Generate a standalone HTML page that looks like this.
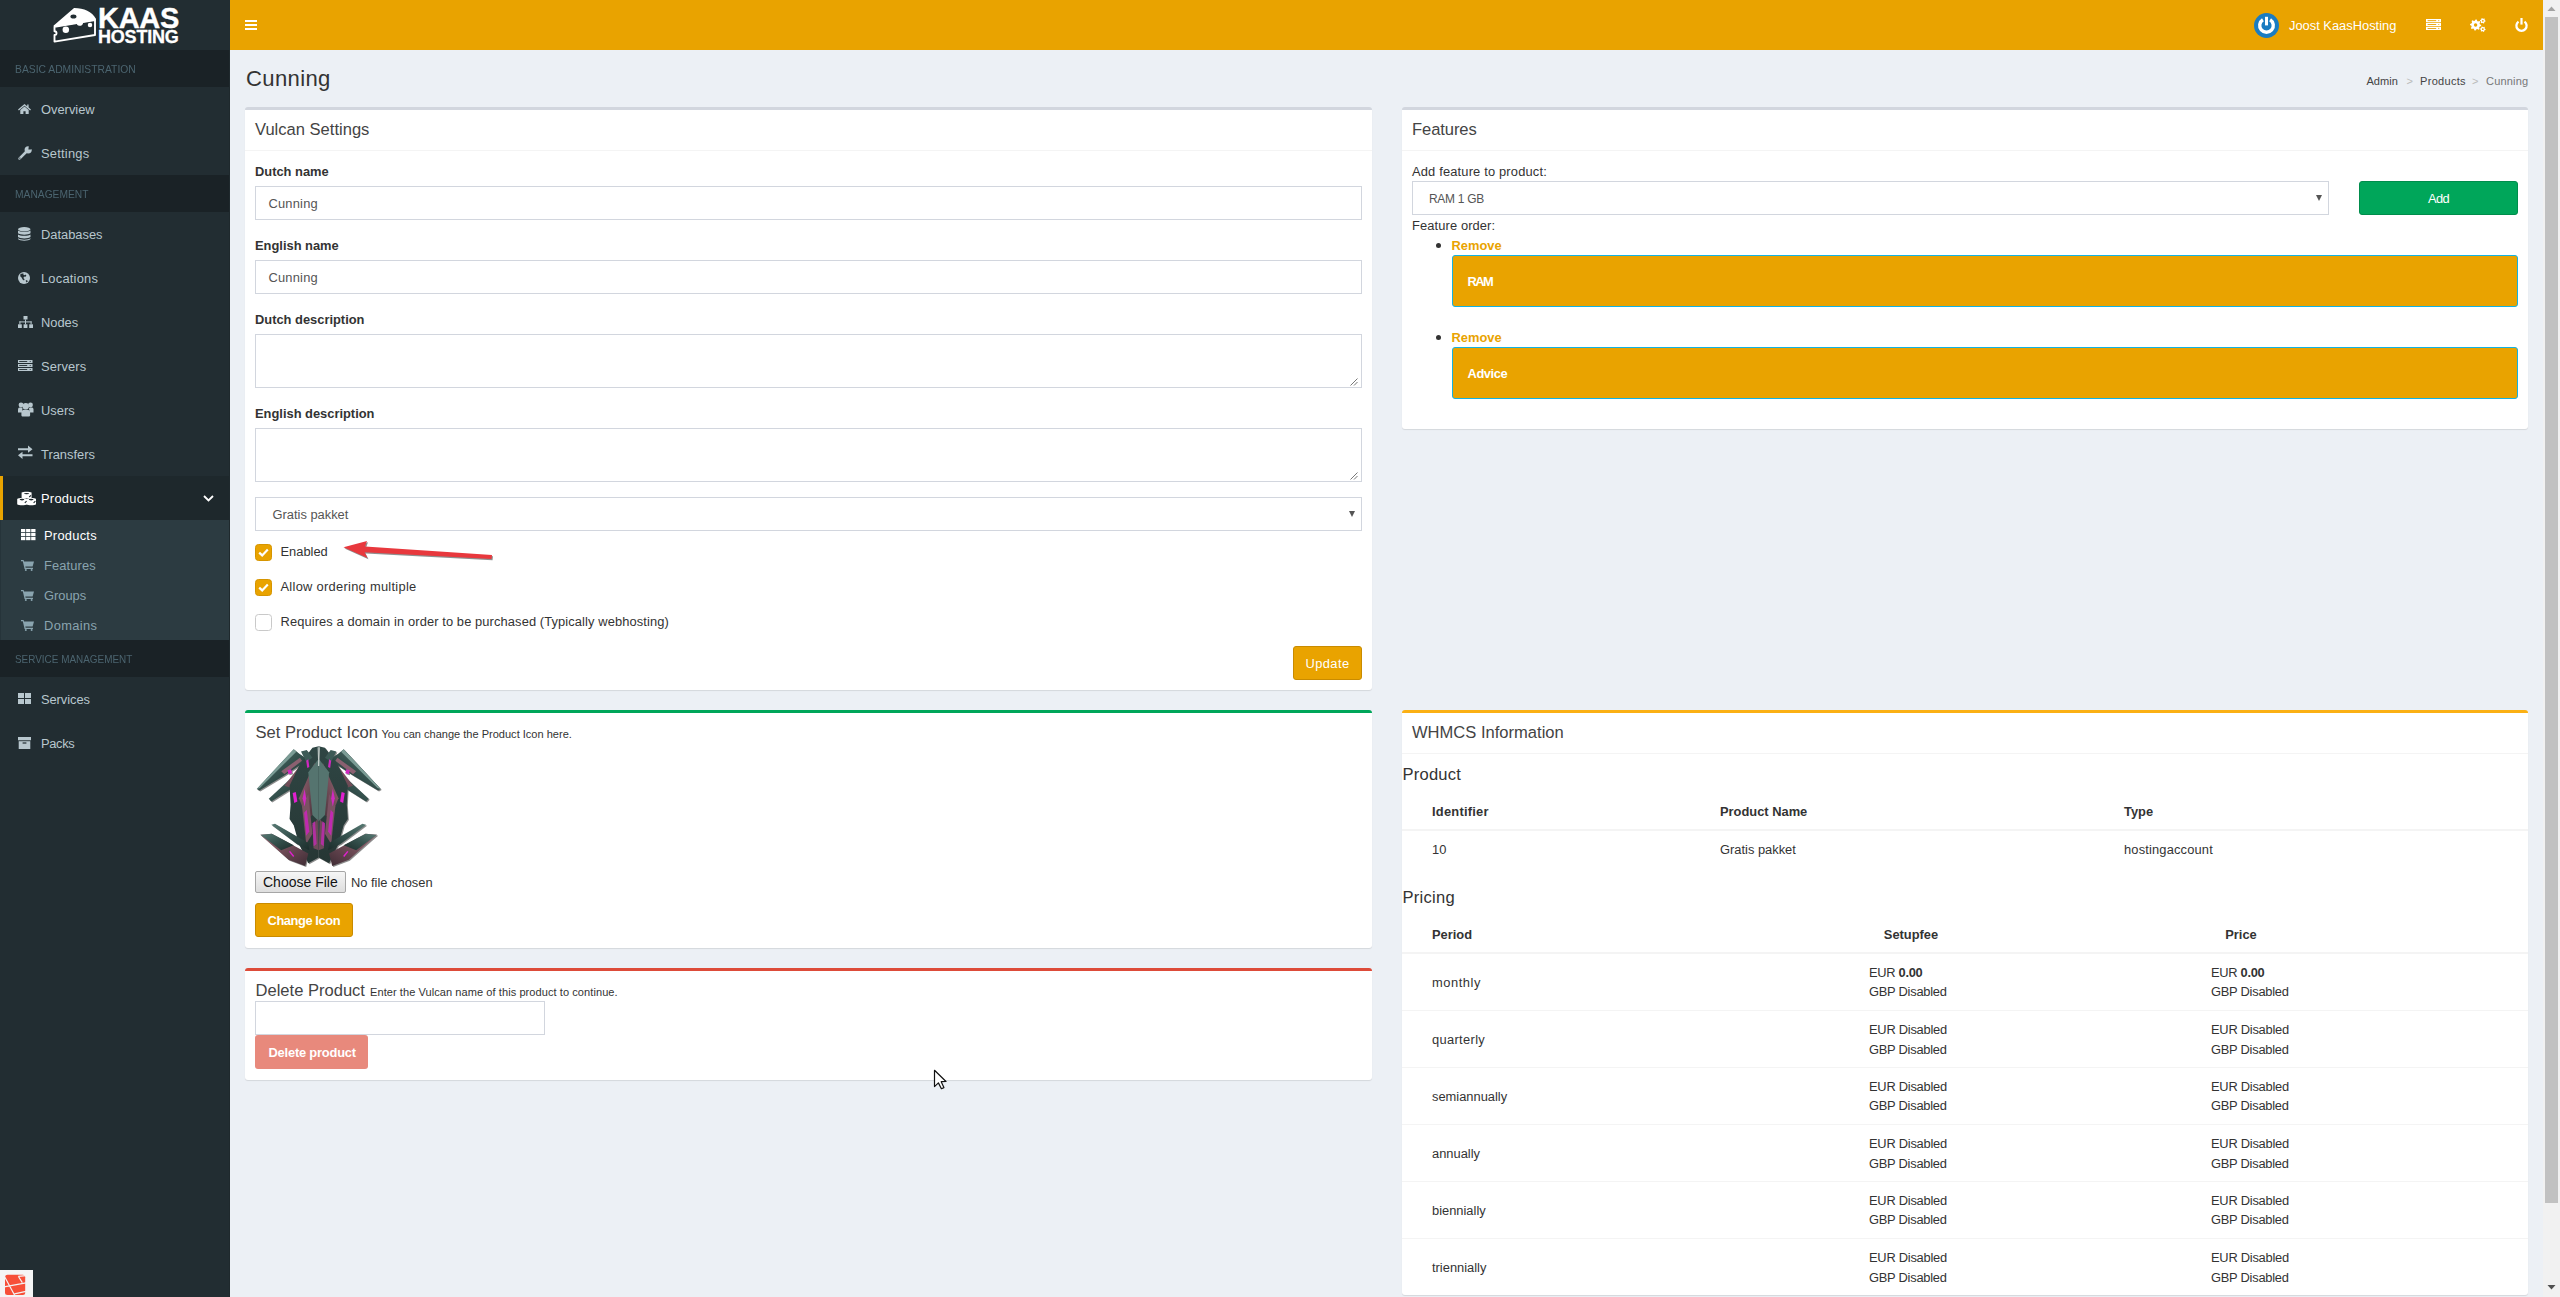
<!DOCTYPE html><html><head><meta charset="utf-8"><title>Cunning</title><style>
html,body{margin:0;padding:0;}
body{width:2560px;height:1297px;overflow:hidden;position:relative;background:#ecf0f5;font-family:'Liberation Sans', sans-serif;color:#333;}
.t{position:absolute;white-space:nowrap;line-height:1;}
svg{position:absolute;display:block;overflow:visible;}
</style></head><body>
<div style="position:absolute;left:0px;top:0px;width:230px;height:1297px;background:#222d32;"></div>
<div style="position:absolute;left:0px;top:50px;width:230px;height:37px;background:#1a2226;"></div>
<div style="position:absolute;left:0px;top:175px;width:230px;height:37px;background:#1a2226;"></div>
<div style="position:absolute;left:0px;top:640px;width:230px;height:37px;background:#1a2226;"></div>
<div style="position:absolute;left:0px;top:476px;width:230px;height:44px;background:#1e282c;"></div>
<div style="position:absolute;left:0px;top:476px;width:3px;height:44px;background:#e9a300;"></div>
<div style="position:absolute;left:0px;top:520px;width:230px;height:120px;background:#2c3b41;"></div>
<div style="position:absolute;left:0px;top:520px;width:1px;height:120px;background:#26343a;"></div>
<div style="position:absolute;left:229px;top:50px;width:1px;height:1247px;background:#1f292d;"></div>
<svg style="left:40px;top:0px;" width="160" height="50" viewBox="0 0 2560 800">
<path fill="#fff" d="M215,410 L540,130 C700,128 830,185 895,300 L895,322 L690,358 C690,395 660,415 630,412 C600,410 590,390 588,375 L240,432 Z"/>
<ellipse cx="535" cy="263" rx="48" ry="32" fill="#222d32"/>
<path fill="none" stroke="#fff" stroke-width="30" stroke-linejoin="round" d="M232,428 L880,322 L880,560 L232,665 L232,560 C275,555 275,505 232,500 Z"/>
<circle cx="413" cy="475" r="52" fill="#fff"/>
<circle cx="800" cy="400" r="36" fill="#fff"/>
</svg>
<div class="t" style="left:98px;top:4px;font-size:29px;font-weight:bold;color:#fff;transform:scaleX(1.0);transform-origin:left top;letter-spacing:-0.3px;-webkit-text-stroke:0.4px #fff">KAAS</div>
<div class="t" style="left:98px;top:28px;font-size:18px;font-weight:bold;color:#fff;transform:scaleX(1.0);transform-origin:left top;letter-spacing:-0.2px;-webkit-text-stroke:0.3px #fff">HOSTING</div>
<div class="t" style="left:15px;top:64px;font-size:11.04px;font-weight:normal;color:#4b646f;transform:scaleX(0.935);transform-origin:left top;">BASIC ADMINISTRATION</div>
<div class="t" style="left:15px;top:189px;font-size:11.04px;font-weight:normal;color:#4b646f;transform:scaleX(0.93);transform-origin:left top;">MANAGEMENT</div>
<div class="t" style="left:15px;top:654px;font-size:11.04px;font-weight:normal;color:#4b646f;transform:scaleX(0.9);transform-origin:left top;">SERVICE MANAGEMENT</div>
<div class="t" style="left:41px;top:104px;font-size:12.88px;font-weight:normal;color:#b8c7ce;">Overview</div>
<div class="t" style="left:41px;top:148px;font-size:12.88px;font-weight:normal;color:#b8c7ce;letter-spacing:0.233px;">Settings</div>
<div class="t" style="left:41px;top:229px;font-size:12.88px;font-weight:normal;color:#b8c7ce;">Databases</div>
<div class="t" style="left:41px;top:273px;font-size:12.88px;font-weight:normal;color:#b8c7ce;letter-spacing:0.214px;">Locations</div>
<div class="t" style="left:41px;top:317px;font-size:12.88px;font-weight:normal;color:#b8c7ce;">Nodes</div>
<div class="t" style="left:41px;top:361px;font-size:12.88px;font-weight:normal;color:#b8c7ce;letter-spacing:0.127px;">Servers</div>
<div class="t" style="left:41px;top:405px;font-size:12.88px;font-weight:normal;color:#b8c7ce;">Users</div>
<div class="t" style="left:41px;top:449px;font-size:12.88px;font-weight:normal;color:#b8c7ce;">Transfers</div>
<div class="t" style="left:41px;top:493px;font-size:12.88px;font-weight:normal;color:#ffffff;letter-spacing:0.254px;">Products</div>
<div class="t" style="left:44px;top:530px;font-size:12.88px;font-weight:normal;color:#ffffff;letter-spacing:0.254px;">Products</div>
<div class="t" style="left:44px;top:560px;font-size:12.88px;font-weight:normal;color:#8aa4af;letter-spacing:0.127px;">Features</div>
<div class="t" style="left:44px;top:590px;font-size:12.88px;font-weight:normal;color:#8aa4af;">Groups</div>
<div class="t" style="left:44px;top:620px;font-size:12.88px;font-weight:normal;color:#8aa4af;letter-spacing:0.363px;">Domains</div>
<div class="t" style="left:41px;top:694px;font-size:12.88px;font-weight:normal;color:#b8c7ce;letter-spacing:-0.062px;">Services</div>
<div class="t" style="left:41px;top:738px;font-size:12.88px;font-weight:normal;color:#b8c7ce;letter-spacing:-0.316px;">Packs</div>
<svg style="left:18px;top:104px;" width="13" height="10" viewBox="0 0 13 10"><g fill="#b8c7ce"><path d="M6.5 0 L0 5.4 L0.9 6.4 L6.5 1.7 L12.1 6.4 L13 5.4 L10.6 3.4 V0.6 H9.2 V2.2 Z"/><path d="M2.3 5.9 L6.5 2.4 L10.7 5.9 V10 H7.6 V7.2 H5.4 V10 H2.3 Z"/></g></svg>
<svg style="left:18px;top:146px;" width="14" height="14" viewBox="0 0 14 14"><g fill="#b8c7ce"><circle cx="10.2" cy="3.8" r="3.6"/><path d="M8.6 3.6 L10.4 5.4 L2.6 13.2 C2 13.8 1 13.8 0.6 13.4 C0.2 13 0.2 12 0.8 11.4 Z"/></g><path d="M10.8 0 L14 0 L14 3.2 L12.2 3.6 L10.4 3.6 Z" fill="#222d32"/><circle cx="1.9" cy="12.1" r="0.7" fill="#222d32"/></svg>
<svg style="left:18px;top:227px;" width="12.5" height="14" viewBox="0 0 12.5 14"><g fill="#b8c7ce"><ellipse cx="6.25" cy="2.2" rx="6.25" ry="2.2"/><path d="M0 3.6 C1.5 5.4 11 5.4 12.5 3.6 V6.3 C11 8.1 1.5 8.1 0 6.3 Z"/><path d="M0 7.5 C1.5 9.3 11 9.3 12.5 7.5 V10.1 C11 11.9 1.5 11.9 0 10.1 Z"/><path d="M0 11.3 C1.5 13.1 11 13.1 12.5 11.3 V12 C11 14.2 1.5 14.2 0 12 Z"/></g></svg>
<svg style="left:18px;top:272px;" width="12" height="12" viewBox="0 0 12 12"><circle cx="6" cy="6" r="6" fill="#b8c7ce"/><path fill="#222d32" d="M2.2 2.6 C3 1.6 4.4 1.2 5.6 1.5 L5.2 2.6 L6.8 3.2 L7.6 2.4 L8.4 3.6 L7.2 5 L6.2 4.6 L5.4 6 L6.6 7.2 L6 8.6 L4.6 7.4 L3.6 5.4 L2.4 4.6 Z"/><path fill="#222d32" d="M7.6 8.8 L9 8 L9.8 9.4 L8.6 10.6 Z"/></svg>
<svg style="left:18px;top:316px;" width="15" height="12" viewBox="0 0 15 12"><g fill="#b8c7ce"><rect x="5.5" y="0" width="4" height="3.5"/><rect x="0" y="8.3" width="3.8" height="3.7"/><rect x="5.6" y="8.3" width="3.8" height="3.7"/><rect x="11.2" y="8.3" width="3.8" height="3.7"/><rect x="7" y="3.5" width="1" height="4.8"/><rect x="1.4" y="5.4" width="12.2" height="1"/><rect x="1.4" y="5.4" width="1" height="3"/><rect x="12.6" y="5.4" width="1" height="3"/></g></svg>
<svg style="left:18px;top:360px;" width="14.5" height="11" viewBox="0 0 14.5 11"><g fill="#b8c7ce"><rect x="0" y="0" width="14.5" height="3"/><rect x="0" y="4" width="14.5" height="3"/><rect x="0" y="8" width="14.5" height="3"/></g><g fill="#222d32"><rect x="1.2" y="1.1" width="8" height="0.9"/><rect x="1.2" y="5.1" width="8" height="0.9"/><rect x="1.2" y="9.1" width="8" height="0.9"/><circle cx="12.2" cy="1.5" r="0.6"/><circle cx="12.2" cy="5.5" r="0.6"/><circle cx="12.2" cy="9.5" r="0.6"/></g></svg>
<svg style="left:18px;top:402px;" width="15.5" height="14.5" viewBox="0 0 15.5 14.5"><g fill="#b8c7ce"><circle cx="3" cy="3" r="2.4"/><circle cx="12.5" cy="3" r="2.4"/><path d="M0 7.5 C0 5.8 1.2 5.5 2.5 5.5 L4.5 5.8 L4 10.5 L0 10.5 Z"/><path d="M15.5 7.5 C15.5 5.8 14.3 5.5 13 5.5 L11 5.8 L11.5 10.5 L15.5 10.5 Z"/><circle cx="7.75" cy="4.2" r="3.2"/><path d="M3.4 10.8 C3.4 8.5 4.8 7.8 6 7.8 L9.5 7.8 C10.7 7.8 12.1 8.5 12.1 10.8 L12.1 13 C12.1 14 11.5 14.5 10.5 14.5 L5 14.5 C4 14.5 3.4 14 3.4 13 Z"/></g></svg>
<svg style="left:18px;top:444.5px;" width="14.5" height="14.5" viewBox="0 0 14.5 14.5"><g fill="#b8c7ce"><path d="M0 3.2 H10 V0.5 L14.5 4.2 L10 7.8 V5.2 H0 Z"/><path d="M14.5 9.3 H4.5 V6.7 L0 10.3 L4.5 14 V11.3 H14.5 Z"/></g></svg>
<svg style="left:17px;top:490.5px;" width="19" height="14.5" viewBox="0 0 19 14.5"><g fill="#fff"><path d="M4.6 1.6 C6 0.3 13 0.3 14.6 1.6 V7 H4.6 Z"/><path d="M0.2 8 C1.5 6.6 8.6 6.6 10 8 V13.2 C8.6 14.6 1.5 14.6 0.2 13.2 Z"/><path d="M9.4 8 C10.8 6.6 17.8 6.6 19 8 V13.2 C17.8 14.6 10.8 14.6 9.4 13.2 Z"/></g><g fill="#1e282c"><ellipse cx="9.6" cy="2.6" rx="2.6" ry="0.7"/><ellipse cx="5" cy="8.6" rx="2.4" ry="0.8"/><ellipse cx="14.2" cy="8.6" rx="2.4" ry="0.8"/></g><g stroke="#1e282c" stroke-width="1.1"><path d="M12.2 6 L14 4.4"/><path d="M7.8 11.8 L9.6 10.2"/><path d="M16.6 11.8 L18.4 10.2"/></g></svg>
<svg style="left:203px;top:495px;" width="11" height="7" viewBox="0 0 11 7"><path d="M1 1 L5.5 5.5 L10 1" fill="none" stroke="#fff" stroke-width="1.8"/></svg>
<svg style="left:20.5px;top:529px;" width="15" height="11.2" viewBox="0 0 15 11.2"><g fill="#fff"><rect x="0.0" y="0" width="4.3" height="3.2"/><rect x="5.1" y="0" width="4.3" height="3.2"/><rect x="10.2" y="0" width="4.3" height="3.2"/><rect x="0.0" y="4" width="4.3" height="3.2"/><rect x="5.1" y="4" width="4.3" height="3.2"/><rect x="10.2" y="4" width="4.3" height="3.2"/><rect x="0.0" y="8" width="4.3" height="3.2"/><rect x="5.1" y="8" width="4.3" height="3.2"/><rect x="10.2" y="8" width="4.3" height="3.2"/></g></svg>
<svg style="left:21px;top:560px;" width="13" height="11" viewBox="0 0 13 11"><g fill="#8aa4af"><path d="M0 0 H2.6 L3 1.6 H13 L11.6 6.6 H4.3 L4.6 7.8 H12 V9 H3.6 L1.8 1.2 H0 Z"/><circle cx="4.8" cy="10" r="1"/><circle cx="10.6" cy="10" r="1"/></g></svg>
<svg style="left:21px;top:590px;" width="13" height="11" viewBox="0 0 13 11"><g fill="#8aa4af"><path d="M0 0 H2.6 L3 1.6 H13 L11.6 6.6 H4.3 L4.6 7.8 H12 V9 H3.6 L1.8 1.2 H0 Z"/><circle cx="4.8" cy="10" r="1"/><circle cx="10.6" cy="10" r="1"/></g></svg>
<svg style="left:21px;top:620px;" width="13" height="11" viewBox="0 0 13 11"><g fill="#8aa4af"><path d="M0 0 H2.6 L3 1.6 H13 L11.6 6.6 H4.3 L4.6 7.8 H12 V9 H3.6 L1.8 1.2 H0 Z"/><circle cx="4.8" cy="10" r="1"/><circle cx="10.6" cy="10" r="1"/></g></svg>
<svg style="left:18px;top:693px;" width="13" height="11" viewBox="0 0 13 11"><g fill="#b8c7ce"><rect x="0" y="0" width="6" height="5"/><rect x="7" y="0" width="6" height="5"/><rect x="0" y="6" width="6" height="5"/><rect x="7" y="6" width="6" height="5"/></g></svg>
<svg style="left:18px;top:737px;" width="13" height="12" viewBox="0 0 13 12"><g fill="#b8c7ce"><rect x="0" y="0" width="13" height="3.3"/><path d="M0.7 4.2 H12.3 V12 H0.7 Z"/></g><rect x="4.6" y="5.4" width="3.8" height="1.2" fill="#222d32"/></svg>
<div style="position:absolute;left:0px;top:1270px;width:33px;height:27px;background:#f5f5f5;"></div>
<svg style="left:4px;top:1274px;" width="22" height="22" viewBox="0 0 22 22"><rect x="1" y="0.8" width="20.2" height="20.2" rx="2.5" fill="#f74f38"/><path d="M0.5 2.5 L10.5 21 M0 12.8 L22 8.8 M14.3 2.3 L18.3 8.6 M14.3 2.3 L22 1.6 M10.5 19.9 L22 17.4" stroke="#f4f4f4" stroke-width="1.2" fill="none"/></svg>
<div style="position:absolute;left:230px;top:0px;width:2313px;height:50px;background:#e9a300;"></div>
<div style="position:absolute;left:245px;top:20px;width:12px;height:2px;background:#fff;"></div>
<div style="position:absolute;left:245px;top:24px;width:12px;height:2px;background:#fff;"></div>
<div style="position:absolute;left:245px;top:28px;width:12px;height:2px;background:#fff;"></div>
<svg style="left:2254px;top:13px;" width="25" height="25" viewBox="0 0 25 25"><circle cx="12.5" cy="12.5" r="12.5" fill="#1a7cc1"/><path d="M8.9 6.73 A6.8 6.8 0 1 0 16.1 6.73" fill="none" stroke="#fff" stroke-width="3.4"/><rect x="11" y="3.8" width="3" height="8.6" fill="#fff"/></svg>
<div class="t" style="left:2289px;top:20px;font-size:12.88px;font-weight:normal;color:#fff;">Joost KaasHosting</div>
<svg style="left:2426px;top:19px;" width="15" height="11" viewBox="0 0 15 11"><g fill="#fff"><rect x="0" y="0" width="15" height="3.2"/><rect x="0" y="3.9" width="15" height="3.2"/><rect x="0" y="7.8" width="15" height="3.2"/></g><g fill="#e9a300"><rect x="1.6" y="1.2" width="8.6" height="0.9"/><rect x="1.6" y="5.1" width="8.6" height="0.9"/><rect x="1.6" y="9" width="8.6" height="0.9"/><circle cx="12.8" cy="1.6" r="0.55"/><circle cx="12.8" cy="5.5" r="0.55"/><circle cx="12.8" cy="9.4" r="0.55"/></g></svg>
<svg style="left:2470px;top:18px;" width="16" height="14" viewBox="0 0 16 14"><polygon points="11.20,7.00 11.09,8.09 9.57,8.65 9.18,9.39 9.56,10.96 8.71,11.66 7.25,10.97 6.44,11.22 5.60,12.60 4.51,12.49 3.95,10.97 3.21,10.58 1.64,10.96 0.94,10.11 1.63,8.65 1.38,7.84 0.00,7.00 0.11,5.91 1.63,5.35 2.02,4.61 1.64,3.04 2.49,2.34 3.95,3.03 4.76,2.78 5.60,1.40 6.69,1.51 7.25,3.03 7.99,3.42 9.56,3.04 10.26,3.89 9.57,5.35 9.82,6.16" fill="#fff"/><circle cx="5.6" cy="7" r="1.7" fill="#e9a300"/><polygon points="15.60,2.80 15.50,3.52 14.62,3.85 14.28,4.28 14.20,5.22 13.52,5.50 12.80,4.90 12.26,4.83 11.40,5.22 10.82,4.78 10.98,3.85 10.77,3.34 10.00,2.80 10.10,2.08 10.98,1.75 11.32,1.32 11.40,0.38 12.08,0.10 12.80,0.70 13.34,0.77 14.20,0.38 14.78,0.82 14.62,1.75 14.83,2.26" fill="#fff"/><circle cx="12.8" cy="2.8" r="0.9" fill="#e9a300"/><polygon points="15.60,11.20 15.50,11.92 14.62,12.25 14.28,12.68 14.20,13.62 13.52,13.90 12.80,13.30 12.26,13.23 11.40,13.62 10.82,13.18 10.98,12.25 10.77,11.74 10.00,11.20 10.10,10.48 10.98,10.15 11.32,9.72 11.40,8.78 12.08,8.50 12.80,9.10 13.34,9.17 14.20,8.78 14.78,9.22 14.62,10.15 14.83,10.66" fill="#fff"/><circle cx="12.8" cy="11.2" r="0.9" fill="#e9a300"/></svg>
<svg style="left:2515px;top:18px;" width="13" height="13" viewBox="0 0 13 13"><path d="M3.5 3.6 A5.1 5.1 0 1 0 9.5 3.6" fill="none" stroke="#fff" stroke-width="2.3"/><rect x="5.4" y="0" width="2.2" height="6.6" fill="#fff"/></svg>
<div style="position:absolute;left:2543px;top:0px;width:17px;height:1297px;background:#f1f1f1;"></div>
<div style="position:absolute;left:2545px;top:17px;width:13px;height:1186px;background:#c1c1c1;"></div>
<svg style="left:2547px;top:6px;" width="9" height="5" viewBox="0 0 9 5"><path d="M0.5 5 L4.5 0.5 L8.5 5 Z" fill="#a3a3a3"/></svg>
<svg style="left:2547px;top:1285px;" width="9" height="5" viewBox="0 0 9 5"><path d="M0.5 0 L4.5 4.5 L8.5 0 Z" fill="#505050"/></svg>
<div class="t" style="left:246px;top:68px;font-size:22.08px;font-weight:normal;color:#333;letter-spacing:0.352px;">Cunning</div>
<div class="t" style="left:2366.5px;top:76px;font-size:11.04px;font-weight:normal;color:#444;">Admin</div>
<div class="t" style="left:2406.5px;top:76px;font-size:11.04px;font-weight:normal;color:#bbb;">&gt;</div>
<div class="t" style="left:2420px;top:76px;font-size:11.04px;font-weight:normal;color:#444;letter-spacing:0.300px;">Products</div>
<div class="t" style="left:2472px;top:76px;font-size:11.04px;font-weight:normal;color:#bbb;">&gt;</div>
<div class="t" style="left:2486px;top:76px;font-size:11.04px;font-weight:normal;color:#777;letter-spacing:0.176px;">Cunning</div>
<div style="position:absolute;left:245px;top:107px;width:1127px;height:583px;background:#fff;border-top:3px solid #d2d6de;border-radius:3px;box-shadow:0 1px 1px rgba(0,0,0,0.1);box-sizing:border-box;"></div>
<div style="position:absolute;left:1402px;top:107px;width:1126px;height:322px;background:#fff;border-top:3px solid #d2d6de;border-radius:3px;box-shadow:0 1px 1px rgba(0,0,0,0.1);box-sizing:border-box;"></div>
<div style="position:absolute;left:245px;top:710px;width:1127px;height:238px;background:#fff;border-top:3px solid #00a65a;border-radius:3px;box-shadow:0 1px 1px rgba(0,0,0,0.1);box-sizing:border-box;"></div>
<div style="position:absolute;left:245px;top:968px;width:1127px;height:112px;background:#fff;border-top:3px solid #dd4b39;border-radius:3px;box-shadow:0 1px 1px rgba(0,0,0,0.1);box-sizing:border-box;"></div>
<div style="position:absolute;left:1402px;top:710px;width:1126px;height:585px;background:#fff;border-top:3px solid #fbb014;border-radius:3px;box-shadow:0 1px 1px rgba(0,0,0,0.1);box-sizing:border-box;"></div>
<div class="t" style="left:255px;top:122px;font-size:16.56px;font-weight:normal;color:#444;">Vulcan Settings</div>
<div style="position:absolute;left:245px;top:150px;width:1127px;height:1px;background:#f4f4f4;"></div>
<div class="t" style="left:255px;top:166px;font-size:12.88px;font-weight:bold;color:#333;">Dutch name</div>
<div style="position:absolute;left:255px;top:186px;width:1107px;height:34px;background:#fff;border:1px solid #d2d6de;box-sizing:border-box;"></div>
<div class="t" style="left:268.5px;top:198px;font-size:12.88px;font-weight:normal;color:#555;letter-spacing:0.206px;">Cunning</div>
<div class="t" style="left:255px;top:240px;font-size:12.88px;font-weight:bold;color:#333;">English name</div>
<div style="position:absolute;left:255px;top:260px;width:1107px;height:34px;background:#fff;border:1px solid #d2d6de;box-sizing:border-box;"></div>
<div class="t" style="left:268.5px;top:272px;font-size:12.88px;font-weight:normal;color:#555;letter-spacing:0.206px;">Cunning</div>
<div class="t" style="left:255px;top:314px;font-size:12.88px;font-weight:bold;color:#333;">Dutch description</div>
<div style="position:absolute;left:255px;top:334px;width:1107px;height:54px;background:#fff;border:1px solid #d2d6de;box-sizing:border-box;"></div>
<div class="t" style="left:255px;top:408px;font-size:12.88px;font-weight:bold;color:#333;">English description</div>
<div style="position:absolute;left:255px;top:428px;width:1107px;height:54px;background:#fff;border:1px solid #d2d6de;box-sizing:border-box;"></div>
<svg style="left:1350px;top:378px;" width="8" height="8" viewBox="0 0 8 8"><path d="M7.5 0.5 L0.5 7.5 M7.5 4 L4 7.5" stroke="#777" stroke-width="1"/></svg>
<svg style="left:1350px;top:472px;" width="8" height="8" viewBox="0 0 8 8"><path d="M7.5 0.5 L0.5 7.5 M7.5 4 L4 7.5" stroke="#777" stroke-width="1"/></svg>
<div style="position:absolute;left:255px;top:497px;width:1107px;height:34px;background:#fff;border:1px solid #d2d6de;box-sizing:border-box;"></div>
<div class="t" style="left:272.5px;top:509px;font-size:12.88px;font-weight:normal;color:#555;">Gratis pakket</div>
<svg style="left:1349px;top:511px;" width="6" height="6" viewBox="0 0 6 6"><path d="M0 0 H6 L3 6 Z" fill="#555"/></svg>
<svg style="left:255px;top:544px;" width="17" height="17" viewBox="0 0 17 17"><rect x="0.5" y="0.5" width="16" height="16" rx="3" fill="#e9a300" stroke="#d69500"/><path d="M4.2 8.6 L7.2 11.4 L12.8 5.6" fill="none" stroke="#fff" stroke-width="2.2"/></svg>
<div class="t" style="left:280.5px;top:546px;font-size:12.88px;font-weight:normal;color:#333;">Enabled</div>
<svg style="left:255px;top:579px;" width="17" height="17" viewBox="0 0 17 17"><rect x="0.5" y="0.5" width="16" height="16" rx="3" fill="#e9a300" stroke="#d69500"/><path d="M4.2 8.6 L7.2 11.4 L12.8 5.6" fill="none" stroke="#fff" stroke-width="2.2"/></svg>
<div class="t" style="left:280.5px;top:581px;font-size:12.88px;font-weight:normal;color:#333;letter-spacing:0.282px;">Allow ordering multiple</div>
<svg style="left:255px;top:614px;" width="17" height="17" viewBox="0 0 17 17"><rect x="0.5" y="0.5" width="16" height="16" rx="3" fill="#fff" stroke="#c9c9c9"/></svg>
<div class="t" style="left:280.5px;top:616px;font-size:12.88px;font-weight:normal;color:#333;letter-spacing:0.106px;">Requires a domain in order to be purchased (Typically webhosting)</div>
<svg style="left:340px;top:538px;" width="156" height="24" viewBox="0 0 156 24"><g transform="translate(1,1.2)" opacity="0.55"><path d="M3.5 9.3 L27 3 L25 8.6 L152 17 L151.5 21 L24.6 14.2 L27.5 20 Z" fill="#333"/></g><path d="M3.5 9.3 L27 3 L25 8.6 L152 17 L151.5 21 L24.6 14.2 L27.5 20 Z" fill="#e8383d"/></svg>
<div style="position:absolute;left:1293px;top:646px;width:69px;height:34px;background:#e9a300;border:1px solid #c98b00;border-radius:3px;box-sizing:border-box;"></div>
<div class="t" style="left:1305.5px;top:658px;font-size:12.88px;font-weight:normal;color:#fff;letter-spacing:0.415px;">Update</div>
<div class="t" style="left:1412px;top:122px;font-size:16.56px;font-weight:normal;color:#444;letter-spacing:-0.082px;">Features</div>
<div style="position:absolute;left:1402px;top:150px;width:1126px;height:1px;background:#f4f4f4;"></div>
<div class="t" style="left:1412px;top:166px;font-size:12.88px;font-weight:normal;color:#333;letter-spacing:0.171px;">Add feature to product:</div>
<div style="position:absolute;left:1412px;top:181px;width:917px;height:34px;background:#fff;border:1px solid #d2d6de;box-sizing:border-box;"></div>
<div class="t" style="left:1429px;top:194px;font-size:11.96px;font-weight:normal;color:#555;letter-spacing:-0.286px;">RAM 1 GB</div>
<svg style="left:2316px;top:195px;" width="6" height="6" viewBox="0 0 6 6"><path d="M0 0 H6 L3 6 Z" fill="#555"/></svg>
<div style="position:absolute;left:2359px;top:181px;width:159px;height:34px;background:#00a65a;border:1px solid #008d4c;border-radius:3px;box-sizing:border-box;"></div>
<div class="t" style="left:2138.5px;width:600px;text-align:center;top:193px;font-size:12.88px;font-weight:normal;color:#fff;letter-spacing:-0.611px;">Add</div>
<div class="t" style="left:1412px;top:220px;font-size:12.88px;font-weight:normal;color:#333;letter-spacing:0.117px;">Feature order:</div>
<div style="position:absolute;left:1436px;top:243px;width:5px;height:5px;background:#333;border-radius:50%;"></div>
<div class="t" style="left:1451.5px;top:240px;font-size:12.88px;font-weight:bold;color:#e9a300;">Remove</div>
<div style="position:absolute;left:1452px;top:255px;width:1066px;height:52px;background:#e9a300;border:1px solid #13b2e2;border-radius:3px;box-sizing:border-box;"></div>
<div class="t" style="left:1467.5px;top:276px;font-size:12.88px;font-weight:600;color:#fff;letter-spacing:-1.564px;">RAM</div>
<div style="position:absolute;left:1436px;top:335px;width:5px;height:5px;background:#333;border-radius:50%;"></div>
<div class="t" style="left:1451.5px;top:332px;font-size:12.88px;font-weight:bold;color:#e9a300;">Remove</div>
<div style="position:absolute;left:1452px;top:347px;width:1066px;height:52px;background:#e9a300;border:1px solid #13b2e2;border-radius:3px;box-sizing:border-box;"></div>
<div class="t" style="left:1467.5px;top:368px;font-size:12.88px;font-weight:600;color:#fff;letter-spacing:-0.422px;">Advice</div>
<div class="t" style="left:255.5px;top:725px;font-size:16.56px;font-weight:normal;color:#444;">Set Product Icon</div>
<div class="t" style="left:381.5px;top:729px;font-size:11.04px;font-weight:normal;color:#333;">You can change the Product Icon here.</div>
<div style="position:absolute;left:255px;top:871px;width:91px;height:22px;background:linear-gradient(#f6f6f6,#dedede);border:1px solid #a6a6a6;border-radius:2px;box-sizing:border-box;"></div>
<div class="t" style="left:263px;top:875px;font-size:14px;color:#111;">Choose File</div>
<div class="t" style="left:351px;top:877px;font-size:12.88px;font-weight:normal;color:#333;">No file chosen</div>
<div style="position:absolute;left:255px;top:903px;width:98px;height:34px;background:#e9a300;border:1px solid #c98b00;border-radius:3px;box-sizing:border-box;"></div>
<div class="t" style="left:267.5px;top:915px;font-size:12.88px;font-weight:600;color:#fff;letter-spacing:-0.422px;">Change Icon</div>
<svg style="left:250px;top:740px;filter:drop-shadow(1px 1px 0.6px rgba(0,0,0,0.45));" width="140" height="135" viewBox="0 0 1345 1297">
<defs>
<linearGradient id="tg" x1="0" y1="0" x2="1" y2="1"><stop offset="0" stop-color="#587a74"/><stop offset="0.5" stop-color="#34504c"/><stop offset="1" stop-color="#1c2d2b"/></linearGradient>
<linearGradient id="pg" x1="0" y1="0" x2="1" y2="1"><stop offset="0" stop-color="#a06a78"/><stop offset="1" stop-color="#3e2c34"/></linearGradient>
<linearGradient id="bg2" x1="0" y1="0" x2="0" y2="1"><stop offset="0" stop-color="#2f4644"/><stop offset="1" stop-color="#263634"/></linearGradient>
<g id="half">
<path d="M65,470 L420,88 L470,130 L560,190 L330,340 L90,485 Z" fill="url(#tg)"/>
<path d="M65,470 L420,88 L445,112 L95,462 Z" fill="#7b9c95"/>
<path d="M300,300 L480,170 L500,200 L330,330 Z" fill="#8a6070"/>
<path d="M180,565 L500,270 L570,300 L380,480 L205,590 Z" fill="url(#tg)"/>
<path d="M330,440 L545,160 L620,200 L430,470 Z" fill="url(#pg)"/>
<path d="M380,440 L480,230 L600,75 L660,60 L660,1130 L560,1185 L470,1000 L420,820 L380,760 L390,620 Z" fill="url(#bg2)"/>
<path d="M490,110 L545,95 L600,170 L540,210 Z" fill="#3d5a56"/>
<path d="M470,560 L620,220 L650,300 L630,700 L550,760 Z" fill="url(#pg)"/>
<path d="M560,310 L660,180 L660,780 L600,720 Z" fill="#55746f"/>
<path d="M500,640 L560,520 L600,900 L540,1000 Z" fill="#7a5262"/>
<path d="M600,820 L650,760 L660,1060 L610,1040 Z" fill="#6e4a5a"/>
<path d="M410,510 L440,500 L455,590 L425,605 Z" fill="#e020d0"/>
<path d="M505,560 L525,470 L540,560 L525,640 Z" fill="#d02ac0"/>
<path d="M520,700 L545,670 L570,880 L540,920 Z" fill="#c02ab0"/>
<path d="M600,800 L625,780 L640,1000 L612,1020 Z" fill="#b030a0"/>
<path d="M360,290 L395,280 L405,320 L370,330 Z" fill="#d028c0"/>
<path d="M540,200 L560,185 L570,260 L550,270 Z" fill="#d028c0"/>
<path d="M100,910 L210,900 L560,1090 L530,1210 L370,1150 Z" fill="url(#pg)"/>
<path d="M100,910 L210,900 L420,1010 L300,1060 Z" fill="url(#tg)"/>
<path d="M205,815 L240,805 L560,990 L570,1060 L450,1000 Z" fill="url(#tg)"/>
<path d="M380,1070 L420,1120" stroke="#e020d0" stroke-width="14"/>
<path d="M655,70 L660,250" stroke="#d8e0dc" stroke-width="10"/>
</g>
</defs>
<use href="#half"/>
<use href="#half" transform="translate(1320,0) scale(-1,1)"/>
</svg>
<div class="t" style="left:255.5px;top:983px;font-size:16.56px;font-weight:normal;color:#444;">Delete Product</div>
<div class="t" style="left:370px;top:987px;font-size:11.04px;font-weight:normal;color:#333;letter-spacing:0.068px;">Enter the Vulcan name of this product to continue.</div>
<div style="position:absolute;left:255px;top:1001px;width:290px;height:34px;background:#fff;border:1px solid #d2d6de;box-sizing:border-box;"></div>
<div style="position:absolute;left:255px;top:1035px;width:113px;height:34px;background:#e8897c;border-radius:3px;"></div>
<div class="t" style="left:268.5px;top:1047px;font-size:12.88px;font-weight:600;color:#fff;letter-spacing:-0.193px;">Delete product</div>
<div class="t" style="left:1412px;top:725px;font-size:16.56px;font-weight:normal;color:#444;">WHMCS Information</div>
<div style="position:absolute;left:1402px;top:753px;width:1126px;height:1px;background:#f4f4f4;"></div>
<div class="t" style="left:1402.5px;top:767px;font-size:16.56px;font-weight:normal;color:#333;letter-spacing:0.228px;">Product</div>
<div class="t" style="left:1432px;top:806px;font-size:12.88px;font-weight:bold;color:#333;letter-spacing:0.239px;">Identifier</div>
<div class="t" style="left:1720px;top:806px;font-size:12.88px;font-weight:bold;color:#333;">Product Name</div>
<div class="t" style="left:2124px;top:806px;font-size:12.88px;font-weight:bold;color:#333;">Type</div>
<div style="position:absolute;left:1402px;top:829px;width:1126px;height:2px;background:#f4f4f4;"></div>
<div class="t" style="left:1432px;top:844px;font-size:12.88px;font-weight:normal;color:#333;">10</div>
<div class="t" style="left:1720px;top:844px;font-size:12.88px;font-weight:normal;color:#333;">Gratis pakket</div>
<div class="t" style="left:2124px;top:844px;font-size:12.88px;font-weight:normal;color:#333;letter-spacing:0.161px;">hostingaccount</div>
<div class="t" style="left:1402.5px;top:890px;font-size:16.56px;font-weight:normal;color:#333;letter-spacing:0.260px;">Pricing</div>
<div class="t" style="left:1432px;top:929px;font-size:12.88px;font-weight:bold;color:#333;">Period</div>
<div class="t" style="left:1611px;width:600px;text-align:center;top:929px;font-size:12.88px;font-weight:bold;color:#333;">Setupfee</div>
<div class="t" style="left:1941px;width:600px;text-align:center;top:929px;font-size:12.88px;font-weight:bold;color:#333;">Price</div>
<div style="position:absolute;left:1402px;top:952px;width:1126px;height:2px;background:#f4f4f4;"></div>
<div class="t" style="left:1432px;top:977px;font-size:12.88px;font-weight:normal;color:#333;letter-spacing:0.548px;">monthly</div>
<div class="t" style="left:1869px;top:967px;font-size:12.88px;font-weight:normal;color:#333;letter-spacing:-0.293px;">EUR <b>0.00</b></div>
<div class="t" style="left:2211px;top:967px;font-size:12.88px;font-weight:normal;color:#333;letter-spacing:-0.293px;">EUR <b>0.00</b></div>
<div class="t" style="left:1869px;top:986px;font-size:12.88px;font-weight:normal;color:#333;letter-spacing:-0.249px;">GBP Disabled</div>
<div class="t" style="left:2211px;top:986px;font-size:12.88px;font-weight:normal;color:#333;letter-spacing:-0.249px;">GBP Disabled</div>
<div style="position:absolute;left:1402px;top:1010px;width:1126px;height:1px;background:#f4f4f4;"></div>
<div class="t" style="left:1432px;top:1034px;font-size:12.88px;font-weight:normal;color:#333;letter-spacing:0.334px;">quarterly</div>
<div class="t" style="left:1869px;top:1024px;font-size:12.88px;font-weight:normal;color:#333;letter-spacing:-0.249px;">EUR Disabled</div>
<div class="t" style="left:2211px;top:1024px;font-size:12.88px;font-weight:normal;color:#333;letter-spacing:-0.249px;">EUR Disabled</div>
<div class="t" style="left:1869px;top:1044px;font-size:12.88px;font-weight:normal;color:#333;letter-spacing:-0.249px;">GBP Disabled</div>
<div class="t" style="left:2211px;top:1044px;font-size:12.88px;font-weight:normal;color:#333;letter-spacing:-0.249px;">GBP Disabled</div>
<div style="position:absolute;left:1402px;top:1067px;width:1126px;height:1px;background:#f4f4f4;"></div>
<div class="t" style="left:1432px;top:1091px;font-size:12.88px;font-weight:normal;color:#333;">semiannually</div>
<div class="t" style="left:1869px;top:1081px;font-size:12.88px;font-weight:normal;color:#333;letter-spacing:-0.249px;">EUR Disabled</div>
<div class="t" style="left:2211px;top:1081px;font-size:12.88px;font-weight:normal;color:#333;letter-spacing:-0.249px;">EUR Disabled</div>
<div class="t" style="left:1869px;top:1100px;font-size:12.88px;font-weight:normal;color:#333;letter-spacing:-0.249px;">GBP Disabled</div>
<div class="t" style="left:2211px;top:1100px;font-size:12.88px;font-weight:normal;color:#333;letter-spacing:-0.249px;">GBP Disabled</div>
<div style="position:absolute;left:1402px;top:1124px;width:1126px;height:1px;background:#f4f4f4;"></div>
<div class="t" style="left:1432px;top:1148px;font-size:12.88px;font-weight:normal;color:#333;">annually</div>
<div class="t" style="left:1869px;top:1138px;font-size:12.88px;font-weight:normal;color:#333;letter-spacing:-0.249px;">EUR Disabled</div>
<div class="t" style="left:2211px;top:1138px;font-size:12.88px;font-weight:normal;color:#333;letter-spacing:-0.249px;">EUR Disabled</div>
<div class="t" style="left:1869px;top:1158px;font-size:12.88px;font-weight:normal;color:#333;letter-spacing:-0.249px;">GBP Disabled</div>
<div class="t" style="left:2211px;top:1158px;font-size:12.88px;font-weight:normal;color:#333;letter-spacing:-0.249px;">GBP Disabled</div>
<div style="position:absolute;left:1402px;top:1181px;width:1126px;height:1px;background:#f4f4f4;"></div>
<div class="t" style="left:1432px;top:1205px;font-size:12.88px;font-weight:normal;color:#333;">biennially</div>
<div class="t" style="left:1869px;top:1195px;font-size:12.88px;font-weight:normal;color:#333;letter-spacing:-0.249px;">EUR Disabled</div>
<div class="t" style="left:2211px;top:1195px;font-size:12.88px;font-weight:normal;color:#333;letter-spacing:-0.249px;">EUR Disabled</div>
<div class="t" style="left:1869px;top:1214px;font-size:12.88px;font-weight:normal;color:#333;letter-spacing:-0.249px;">GBP Disabled</div>
<div class="t" style="left:2211px;top:1214px;font-size:12.88px;font-weight:normal;color:#333;letter-spacing:-0.249px;">GBP Disabled</div>
<div style="position:absolute;left:1402px;top:1238px;width:1126px;height:1px;background:#f4f4f4;"></div>
<div class="t" style="left:1432px;top:1262px;font-size:12.88px;font-weight:normal;color:#333;">triennially</div>
<div class="t" style="left:1869px;top:1252px;font-size:12.88px;font-weight:normal;color:#333;letter-spacing:-0.249px;">EUR Disabled</div>
<div class="t" style="left:2211px;top:1252px;font-size:12.88px;font-weight:normal;color:#333;letter-spacing:-0.249px;">EUR Disabled</div>
<div class="t" style="left:1869px;top:1272px;font-size:12.88px;font-weight:normal;color:#333;letter-spacing:-0.249px;">GBP Disabled</div>
<div class="t" style="left:2211px;top:1272px;font-size:12.88px;font-weight:normal;color:#333;letter-spacing:-0.249px;">GBP Disabled</div>
<svg style="left:933px;top:1069px;" width="15" height="22" viewBox="0 0 15 22"><path d="M1.5 1.3 L1.5 17.6 L5.4 13.9 L8.4 19.7 L10.9 18.6 L8.2 12.7 L13 12.5 Z" fill="#fff" stroke="#111" stroke-width="1.2" stroke-linejoin="round"/></svg>
</body></html>
